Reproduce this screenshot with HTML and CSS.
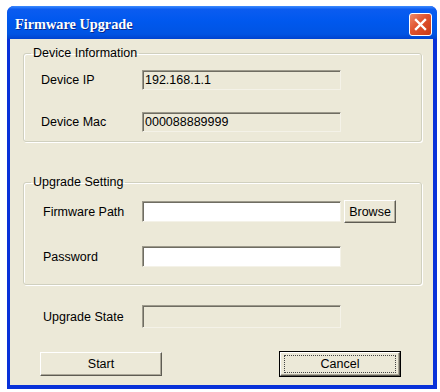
FILE: index.html
```html
<!DOCTYPE html>
<html lang="en">
<head>
    <meta charset="UTF-8">
    <title>Firmware Upgrade</title>
    <link rel="stylesheet" href="styles.css">
</head>
<body>
    <div class="window">
        <div class="titlebar">
            <span class="title">Firmware Upgrade</span>
            <button class="close" title="Close">
                <svg width="13" height="13" viewBox="0 0 13 13"><path d="M2 2 L11 11 M11 2 L2 11" stroke="#fff" stroke-width="2.4" stroke-linecap="square"/></svg>
            </button>
        </div>

        <div class="client">
            <fieldset class="group group-device">
                <legend>Device Information</legend>
                <div class="row"><span class="label">Device IP</span><div class="field readonly">192.168.1.1</div></div>
                <div class="row"><span class="label">Device Mac</span><div class="field readonly">000088889999</div></div>
            </fieldset>

            <fieldset class="group group-upgrade">
                <legend>Upgrade Setting</legend>
                <div class="row row-path"><span class="label">Firmware Path</span><div class="field"></div><button class="btn browse">Browse</button></div>
                <div class="row"><span class="label">Password</span><div class="field"></div></div>
            </fieldset>

            <div class="row state-row"><span class="label">Upgrade State</span><div class="field readonly state"></div></div>

            <div class="actions">
                <button class="btn wide">Start</button>
                <button class="btn wide default"><span class="focus">Cancel</span></button>
            </div>
        </div>
    </div>
</body>
</html>
```

FILE: styles.css
```css
/* Ventana estilo XP */
body { margin: 0; background-color: #fff; font-family: "Liberation Sans", Arial, sans-serif; font-size: 12.5px; color: #000; }
.window { margin: 6px 0 0 7px; width: 430px; height: 383px; display: flex; flex-direction: column; background-color: #0831d9; border-radius: 7px 7px 0 0; overflow: hidden; }
.titlebar { height: 30px; padding: 3px 5px 0 8px; display: flex; align-items: center; justify-content: space-between; background: linear-gradient(#3d8cff 0%, #0b5cf0 10%, #0058ee 45%, #0054e3 85%, #0043cf 100%); }
.title { font-family: "Liberation Serif", "Times New Roman", serif; font-weight: bold; font-size: 14.3px; color: #fff; text-shadow: 1px 1px 0 #0a2a8c; }
.close { width: 23px; height: 23px; padding: 0; border: 1px solid #fff; border-radius: 3px; background: linear-gradient(135deg, #f08a6a 0%, #e0522e 45%, #c83a18 100%); display: flex; align-items: center; justify-content: center; }
.client { flex-grow: 1; margin: 0 4px 4px 3px; background-color: #ece9d8; display: flex; flex-direction: column; }

.group { margin: 7px 11px 0 13px; padding: 10px 0 9px 0; border: 1px solid #d0d0bf; border-radius: 3px; box-shadow: 1px 1px 0 #fff, inset 1px 1px 0 #fff; min-width: 0; }
.group legend { padding: 0 2px; margin-left: 7px; line-height: 14px; }
.group .row { padding-left: 17px; }
.group-device .row + .row { margin-top: 22px; }
.group-upgrade { margin-top: 33px; padding: 11px 0 17px 0; }
.group-upgrade .row { padding-left: 19px; }
.group-upgrade .label { width: 99px; }
.group-upgrade .row + .row { margin-top: 23px; }

.row { display: flex; align-items: center; }
.label { width: 101px; flex-shrink: 0; }
.field { width: 193px; height: 18px; padding: 0 2px; line-height: 18px; background-color: #fff; border: 1px solid; border-color: #9d9a8c #f4f2e8 #f4f2e8 #9d9a8c; box-shadow: inset 1px 1px 0 #6f6d62; }
.group-upgrade .field { height: 19px; }
.field.readonly { background-color: #ece9d8; }
.field.state { height: 21px; }
.state-row { margin: 20px 0 0 33px; }
.state-row .label { width: 99px; }

.btn { font-family: "Liberation Sans", Arial, sans-serif; font-size: 12.5px; color: #000; background-color: #ece9d8; border: 1px solid; border-color: #fff #5e5c53 #5e5c53 #fff; box-shadow: inset -1px -1px 0 #aca899; padding: 0; }
.browse { width: 52px; height: 23px; margin-left: 3px; }
.actions { display: flex; justify-content: space-between; margin: 24px 33px 0 30px; }
.wide { width: 122px; height: 24px; }
.default { width: 120px; outline: 1px solid #000; outline-offset: 0; box-shadow: inset -1px -1px 0 #aca899; }
.focus { display: flex; align-items: center; justify-content: center; margin: 0 3px; height: 16px; border: 1px dotted #444; }
```
